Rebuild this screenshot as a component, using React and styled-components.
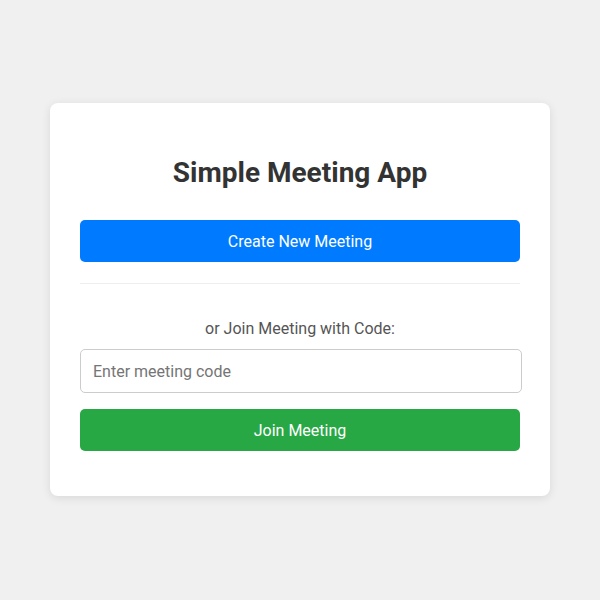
import React from "react"
import styled, { createGlobalStyle } from "styled-components"

const GlobalStyle = createGlobalStyle`
  html, body {
    margin: 0;
    padding: 0;
    background: #f0f0f0;
    font-family: Roboto, "Noto Sans", Arial, sans-serif;
  }
`

const Page = styled.div`
  width: 600px;
  height: 600px;
  display: flex;
  justify-content: center;
  padding-top: 103px;
  box-sizing: border-box;
`

const Card = styled.div`
  width: 500px;
  height: 393px;
  box-sizing: border-box;
  padding: 53px 30px 44px;
  background: white;
  border-radius: 8px;
  box-shadow: 0 2px 10px rgba(0, 0, 0, 0.1);
  display: flex;
  flex-direction: column;
`

const Title = styled.h1`
  margin: 0 0 31px;
  font-size: 28px;
  line-height: 33px;
  font-weight: 700;
  color: #333;
  text-align: center;
`

const Button = styled.button`
  width: 100%;
  height: 42px;
  flex-shrink: 0;
  border: none;
  border-radius: 5px;
  background: ${p => (p.$variant === "join" ? "#28a745" : "#007bff")};
  color: white;
  font-family: inherit;
  font-size: 16px;
  cursor: pointer;
`

const Divider = styled.hr`
  height: 1px;
  border: none;
  background: #eee;
  margin: 21px 0 0;
`

const Label = styled.p`
  margin: 35px 0 11px;
  font-size: 16px;
  color: #555;
  text-align: center;
  line-height: 19px;
`

const Input = styled.input`
  width: 442px;
  height: 44px;
  flex-shrink: 0;
  box-sizing: border-box;
  padding: 0 12px;
  border: 1px solid #ccc;
  border-radius: 5px;
  font-family: inherit;
  font-size: 16px;
  color: #333;
  margin-bottom: 16px;

  &::placeholder {
    color: #757575;
  }
`

const App = () => {
  return (
    <Page>
      <GlobalStyle />
      <Card>
        <Title>Simple Meeting App</Title>
        <Button>Create New Meeting</Button>
        <Divider />
        <Label>or Join Meeting with Code:</Label>
        <Input placeholder="Enter meeting code" />
        <Button $variant="join">Join Meeting</Button>
      </Card>
    </Page>
  )
}

export default App
